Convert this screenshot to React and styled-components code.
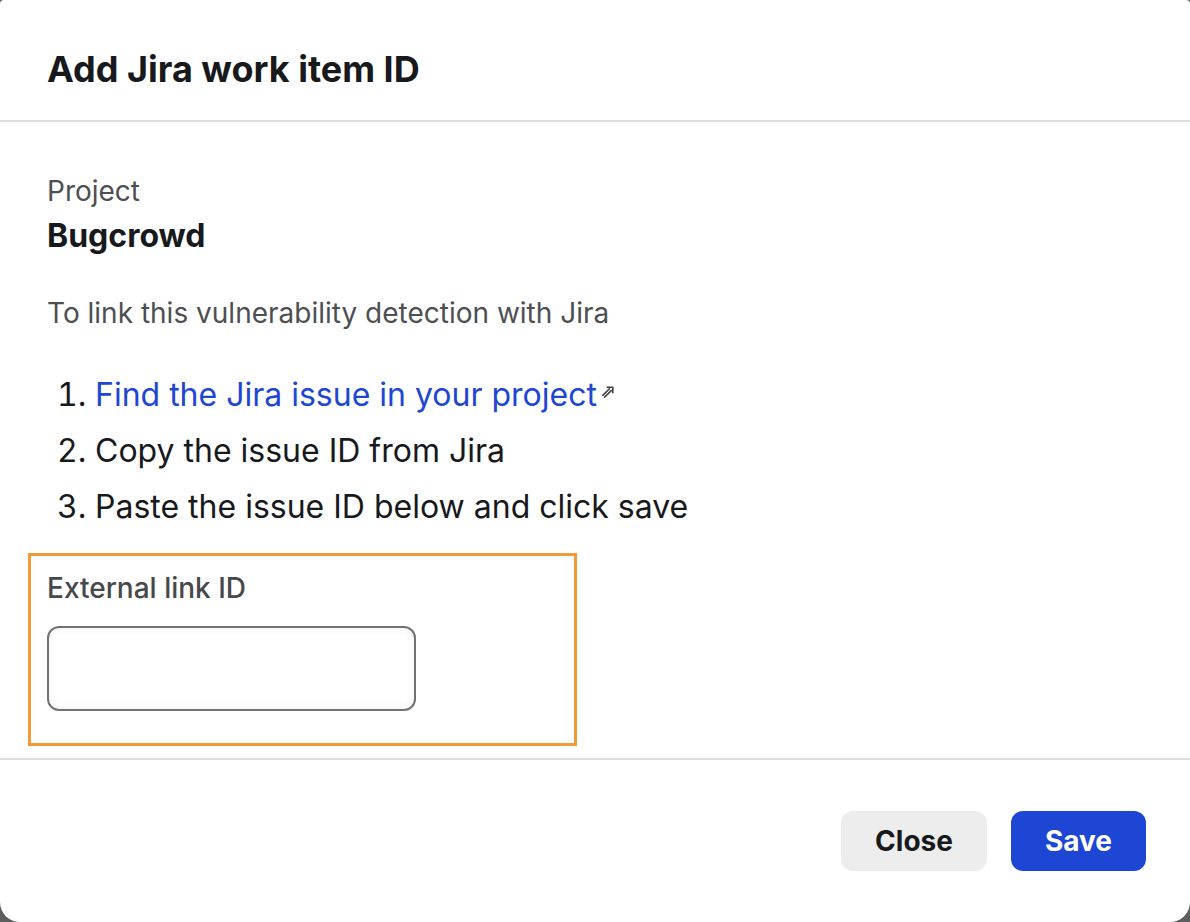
import React from "react";
import styled, { createGlobalStyle } from "styled-components";

const Global = createGlobalStyle`
  html, body { margin: 0; padding: 0; background: #5e5e5e; }
  body { font-family: Inter, "Noto Sans", Roboto, sans-serif; -webkit-font-smoothing: antialiased; }
  * { box-sizing: border-box; }
`;

const Modal = styled.div`
  width: 1190px;
  height: 922px;
  background: #ffffff;
  border-radius: 4px 4px 20px 20px;
  display: flex;
  flex-direction: column;
  overflow: hidden;
`;

const Header = styled.header`
  height: 122px;
  padding: 18px 47px 0;
  display: flex;
  align-items: center;
  border-bottom: 2px solid #dedede;
`;

const Title = styled.h1`
  margin: 0;
  font-size: 36px;
  font-weight: 700;
  color: #17191c;
  line-height: 44px;
`;

const Body = styled.main`
  flex: 1;
  padding: 51px 47px 0;
  display: flex;
  flex-direction: column;
  border-bottom: 2px solid #dedede;
`;

const Label = styled.div`
  font-size: 28px;
  color: #4d4f53;
  line-height: 36px;
`;

const ProjectName = styled.div`
  font-size: 32px;
  font-weight: 700;
  color: #17191c;
  line-height: 40px;
  margin-top: 7px;
`;

const Intro = styled.p`
  margin: 39px 0 0;
  font-size: 28px;
  color: #4d4f53;
  line-height: 36px;
`;

const Steps = styled.ol`
  margin: 36px 0 0;
  padding: 0 0 0 48px;
  font-size: 32px;
  line-height: 56px;
  color: #17191c;
`;

const Link = styled.a`
  color: #1e46d4;
  text-decoration: none;
`;

const ExtIcon = styled.svg`
  width: 14px;
  height: 14px;
  margin-left: 4px;
  vertical-align: 7px;
  color: #3f3f3f;
`;

const FieldBox = styled.div`
  margin: 18px 0 0 -19px;
  width: 549px;
  height: 193px;
  border: 3px solid #f39a36;
  padding: 14px 16px 0 16px;
`;

const FieldLabel = styled.label`
  display: block;
  font-size: 28px;
  font-weight: 500;
  color: #46484c;
  line-height: 36px;
`;

const Input = styled.input`
  display: block;
  margin-top: 20px;
  width: 369px;
  height: 85px;
  border: 2px solid #727272;
  border-radius: 12px;
  background: #ffffff;
  box-shadow: inset 0 0 10px rgba(0, 0, 0, 0.07);
  outline: none;
`;

const Footer = styled.footer`
  height: 162px;
  padding: 0 44px 0 0;
  display: flex;
  justify-content: flex-end;
  align-items: center;
  gap: 24px;
`;

const Button = styled.button`
  height: 60px;
  padding: 0 34px;
  border: none;
  border-radius: 12px;
  font-family: inherit;
  font-size: 28px;
  font-weight: 700;
  background: ${(p) => (p.$primary ? "#1e46d4" : "#ededed")};
  color: ${(p) => (p.$primary ? "#ffffff" : "#17191c")};
  cursor: pointer;
`;

export default function App() {
  return (
    <>
      <Global />
      <Modal>
        <Header>
          <Title>Add Jira work item ID</Title>
        </Header>
        <Body>
          <Label>Project</Label>
          <ProjectName>Bugcrowd</ProjectName>
          <Intro>To link this vulnerability detection with Jira</Intro>
          <Steps>
            <li>
              <Link href="#">Find the Jira issue in your project</Link>
              <ExtIcon viewBox="0 0 14 14" fill="none" stroke="currentColor" strokeWidth="1.6" strokeLinecap="round" strokeLinejoin="round">
                <path d="M1.8 10.4 L8.4 3.8" />
                <path d="M3.6 12.2 L10.2 5.6" />
                <path d="M6.2 2.2 H11.8 V7.8" />
              </ExtIcon>
            </li>
            <li>Copy the issue ID from Jira</li>
            <li>Paste the issue ID below and click save</li>
          </Steps>
          <FieldBox>
            <FieldLabel>External link ID</FieldLabel>
            <Input type="text" />
          </FieldBox>
        </Body>
        <Footer>
          <Button>Close</Button>
          <Button $primary>Save</Button>
        </Footer>
      </Modal>
    </>
  );
}
